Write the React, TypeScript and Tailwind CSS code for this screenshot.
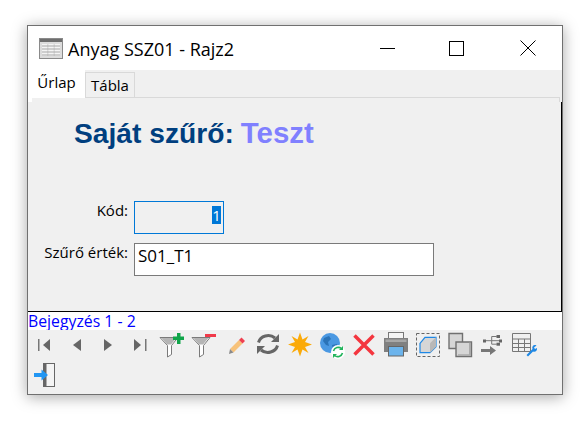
import type { ReactNode } from 'react'

const ui = { fontFamily: '"Open Sans", "Noto Sans", sans-serif' }
const arial = { fontFamily: '"Liberation Sans", Arial, sans-serif' }

const Icon = ({ children }: { children: ReactNode }) => (
  <div className="flex h-[30px] w-8 items-center justify-center">
    <svg width="28" height="28" viewBox="0 0 28 28" fill="none">
      {children}
    </svg>
  </div>
)

// Funnel shared by the add / remove filter buttons
const Funnel = () => (
  <>
    <path d="M2 6.500h18l-6.500 8v9l-4 2.500V14.500z" fill="#fff" stroke="#7a7a7a" strokeWidth="1" />
    <path d="M3.500 7h15l-5.500 6.500H9z" fill="#b5b5b5" />
  </>
)

const toolbarIcons: ReactNode[] = [
  <>
    <rect x="8" y="8" width="1.500" height="12" fill="#777" />
    <path d="M20 8v12l-7-6z" fill="#666" />
  </>,
  <path d="M19 8v12l-8-6z" fill="#666" />,
  <path d="M10 8v12l8-6z" fill="#666" />,
  <>
    <rect x="19" y="8" width="1.500" height="12" fill="#777" />
    <path d="M8 8v12l7-6z" fill="#666" />
  </>,
  <>
    <Funnel />
    <path d="M15 5.500h4V2h3.500v3.500H26V9h-3.500v4H19V9h-4z" fill="#10a54a" />
  </>,
  <>
    <Funnel />
    <rect x="15" y="3" width="11" height="3" fill="#f03a4a" />
  </>,
  <>
    <path d="M8 18l9-9 3.500 3.500-9 9z" fill="#f7c27a" />
    <path d="M7 23l1-5 3.500 3.500z" fill="#8a8a8a" />
    <path d="M17 9l2.500-2.500L23 10l-2.500 2.500z" fill="#ef4050" />
  </>,
  <>
    <path d="M4.500 11.500A10 9 0 0 1 21 7" stroke="#666" strokeWidth="3" />
    <path d="M25 3v8h-8z" fill="#666" />
    <path d="M23.500 14.500A10 9 0 0 1 7 19" stroke="#666" strokeWidth="3" />
    <path d="M3 23v-8h8z" fill="#666" />
  </>,
  <path
    d="M14 1.500l2.500 7 6-3.500-3.500 6 7 2.500-7 2.500 3.500 6-6-3.500-2.500 7-2.500-7-6 3.500 3.500-6-7-2.500 7-2.500-3.500-6 6 3.500z"
    fill="#fbaa09"
  />,
  <>
    <circle cx="12" cy="12" r="10" fill="#4a98e2" />
    <path d="M6 7l5-2 2 3-3 3 1 4-3-1-3-4zM14 14l5-1 1 3-3 4-2-2z" fill="#2a73b8" />
    <circle cx="20" cy="21" r="7" fill="#fff" />
    <path d="M15.500 20a5 5 0 0 1 8-2.500M24.500 22a5 5 0 0 1-8 2.500" stroke="#22b45c" strokeWidth="1.600" />
    <path d="M25 15v4h-4zM15 27v-4h4z" fill="#22b45c" />
  </>,
  <path d="M4.500 4.500l19 19M23.500 4.500l-19 19" stroke="#f4363f" strokeWidth="3.500" />,
  <>
    <rect x="6.500" y="1.500" width="15" height="8" fill="#f4f4f4" stroke="#777" />
    <path d="M2 7h24v14H2z" fill="#808080" />
    <path d="M3.500 8.500h21v2.500h-21z" fill="#a8a8a8" />
    <rect x="6.500" y="15.500" width="15" height="9.500" fill="#6cb4ec" stroke="#666" />
  </>,
  <>
    <rect x="2.500" y="2.500" width="23" height="23" stroke="#666" strokeDasharray="3 2" />
    <path d="M6 12.300L11 6.300h11v9.400L16 21.700H6z" fill="#d6d6d6" stroke="#1e88e5" strokeWidth="1.200" />
    <path d="M16 12.300L22 6.300v9.400L16 21.700z" fill="#b8b8b8" />
  </>,
  <>
    <path d="M3 2.500h13.500v15H3z" fill="#d6d6d6" stroke="#707070" strokeWidth="1.400" />
    <path d="M10 11h15.500v14.500H10z" fill="#d6d6d6" stroke="#707070" strokeWidth="1.400" />
    <path d="M23 11.700h2v13h-13v-1.500h11z" fill="#aaa" />
  </>,
  <>
    <path d="M8 9.700h13M13.700 9.700V5.500h5M13.700 9.700v3.500h5" stroke="#777" />
    <rect x="5" y="8.500" width="3" height="3" fill="#666" />
    <rect x="18.500" y="4" width="3.500" height="3" fill="#666" />
    <rect x="21" y="8.500" width="3" height="3" fill="#666" />
    <rect x="18.500" y="11.700" width="3.500" height="3" fill="#666" />
    <path d="M3 18h9v-3l6 4.500-6 4.500v-3H3z" fill="#777" />
  </>,
  <>
    <path d="M2.500 2.500h18v18h-18zM2.500 8h18M2.500 12.500h18M2.500 16.500h18M8.500 8v12.500M14.500 8v12.500" stroke="#777" />
    <path d="M16.500 24l6-6c-1-3 1.500-5 4-3.500l-2.500 2 1 1.500 2-1c.5 3-2 4.500-4 3.500l-5 5z" fill="#1e88e5" />
  </>,
  <>
    <rect x="13.500" y="2.500" width="11" height="23" fill="#f4f4f4" stroke="#666" />
    <rect x="13" y="2" width="3.500" height="24" fill="#666" />
    <path d="M4 12h7.500V8.500l6.500 5.500-6.500 5.500V16H4z" fill="#2196f3" />
  </>,
]

export default function App() {
  return (
    <div className="h-[428px] w-[587px] overflow-hidden bg-white pl-[27px] pt-[25px]">
      <div
        className="flex h-[370px] w-[536px] flex-col border border-[#707070] bg-[#f0f0f0] shadow-[0_2px_14px_rgba(0,0,0,0.35)]"
        style={ui}
      >
        {/* Title bar */}
        <div className="flex h-11 shrink-0 items-center bg-white text-black">
          <svg className="ml-[11px]" width="24" height="21" viewBox="0 0 24 21">
            <rect x="0.500" y="0.500" width="23" height="20" fill="#dcdcdc" stroke="#8a8a8a" />
            <rect x="1" y="1" width="22" height="3" fill="#6e6e6e" />
            <path d="M3 6h5v12H3zM9.500 6h5v12h-5zM16 6h5v12h-5z" fill="#f4f4f4" />
            <path d="M3 8h18M3 11h18M3 14h18M3 17h18" stroke="#a8a8a8" />
          </svg>
          <span className="ml-[5px] pt-[2px] text-[18px] leading-none">Anyag SSZ01 - Rajz2</span>
          <div className="ml-auto flex items-center">
            <svg width="15" height="15" viewBox="0 0 15 15" className="mr-[54px]">
              <path d="M0 7.500h15" stroke="#000" />
            </svg>
            <svg width="15" height="15" viewBox="0 0 15 15" className="mr-[56px]">
              <rect x="0.500" y="0.500" width="14" height="14" fill="none" stroke="#000" />
            </svg>
            <svg width="16" height="16" viewBox="0 0 16 16" className="mr-[26px]">
              <path d="M0.500 0.500l15 15M15.500 0.500l-15 15" stroke="#000" />
            </svg>
          </div>
        </div>

        {/* Tabs */}
        <div className="flex h-[27px] shrink-0 items-start text-[15px] leading-none text-black">
          <div className="relative z-10 flex h-[28px] w-[57px] justify-center bg-white pt-[5px]">Űrlap</div>
          <div className="mt-[2px] flex h-[25px] w-[50px] items-center justify-center border border-b-0 border-[#d9d9d9]">
            Tábla
          </div>
        </div>

        {/* Pane edge: white corner under the active tab, black lines start below it */}
        <div className="flex h-[5px] shrink-0">
          <div className="w-1 bg-white" />
          <div className="mr-[2px] flex-1 border-t border-r border-[#d9d9d9]" />
        </div>

        {/* Form panel */}
        <div className="min-h-0 flex-1 border-r border-b border-black bg-[#f0f0f0]">
          <div className="flex items-baseline pl-[46px] pt-[13px] text-[28.2px] font-bold leading-[36px]" style={arial}>
            <span className="text-[#003f7f]">Saját szűrő:</span>
            <span className="ml-[7px] text-[29.4px] text-[#8080ff]">Teszt</span>
          </div>
          <div className="mt-[50px] flex items-start">
            <div className="h-5 w-[100px] text-right text-[15px] leading-[18px] text-black">Kód:</div>
            <div className="ml-[6px] flex h-[33px] w-[90px] justify-end border border-[#0078d7] pr-[2px] pt-[4px]">
              <span className="flex h-[18px] w-[9px] items-center justify-center bg-[#0078d7] text-[15px] text-white">1</span>
            </div>
          </div>
          <div className="mt-[9px] flex items-start">
            <div className="h-5 w-[100px] text-right text-[15px] leading-[18px] text-black">Szűrő érték:</div>
            <div className="ml-[6px] flex h-[33px] w-[300px] items-start border border-[#7a7a7a] bg-white pl-[3px] pt-[1px] text-[17px] leading-[22px] text-black">
              S01_T1
            </div>
          </div>
        </div>

        {/* Record counter */}
        <div className="h-[18px] shrink-0 overflow-hidden bg-white text-[15.8px] leading-[19px] text-[#0000ff]">
          Bejegyzés 1 - 2
        </div>

        {/* Toolbar */}
        <div className="flex h-[64px] shrink-0 flex-wrap content-start">
          {toolbarIcons.map((icon, i) => (
            <Icon key={i}>{icon}</Icon>
          ))}
        </div>
      </div>
    </div>
  )
}
